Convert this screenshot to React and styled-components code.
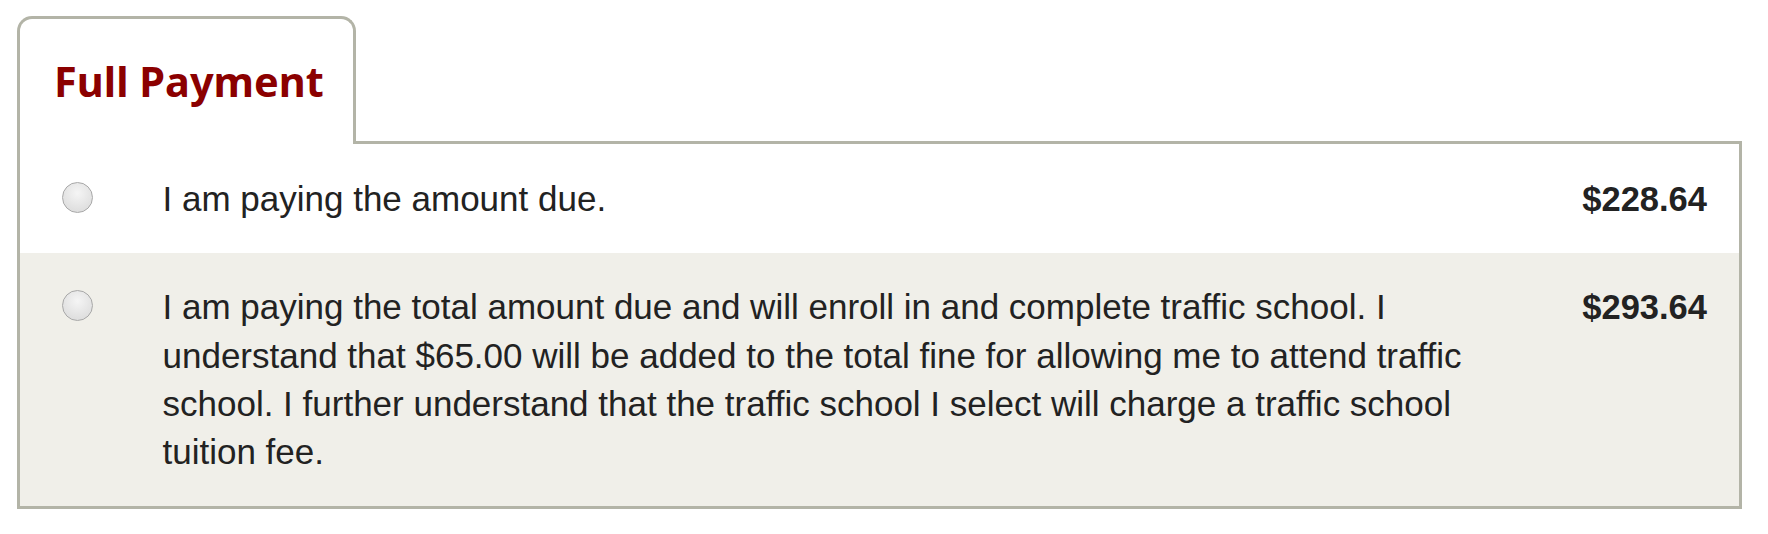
import React, { useState } from "react";
import styled, { createGlobalStyle } from "styled-components";

const options = [
  {
    id: "due",
    label: "I am paying the amount due.",
    amount: "$228.64",
  },
  {
    id: "school",
    label:
      "I am paying the total amount due and will enroll in and complete traffic school. I understand that $65.00 will be added to the total fine for allowing me to attend traffic school. I further understand that the traffic school I select will charge a traffic school tuition fee.",
    amount: "$293.64",
  },
];

function App() {
  const [selected, setSelected] = useState(null);

  return (
    <>
      <GlobalStyle />
      <Wrapper>
        <TabBar>
          <Tab>
            <TabTitle>Full Payment</TabTitle>
          </Tab>
        </TabBar>
        <Panel>
          {options.map((opt, idx) => (
            <Row key={opt.id} shaded={idx % 2 === 1}>
              <RadioCell>
                <Radio
                  type="radio"
                  name="payment"
                  checked={selected === opt.id}
                  onChange={() => setSelected(opt.id)}
                />
              </RadioCell>
              <Label>{opt.label}</Label>
              <Amount>{opt.amount}</Amount>
            </Row>
          ))}
        </Panel>
      </Wrapper>
    </>
  );
}

export default App;

const GlobalStyle = createGlobalStyle`
  body {
    margin: 0;
    background: #ffffff;
    font-family: "Liberation Sans", Arial, sans-serif;
  }
`;

const Wrapper = styled.div`
  padding: 16px 26px 0 17px;
`;

const TabBar = styled.div`
  display: flex;
`;

const Tab = styled.div`
  box-sizing: border-box;
  width: 339px;
  height: 128px;
  display: flex;
  align-items: center;
  padding-left: 34px;
  background: #ffffff;
  border: 3px solid #b3b4a7;
  border-bottom: none;
  border-radius: 15px 15px 0 0;
  margin-bottom: -3px;
  position: relative;
  z-index: 1;
`;

const TabTitle = styled.span`
  font-family: "Noto Sans", "Open Sans", sans-serif;
  font-weight: 700;
  font-size: 41.5px;
  line-height: 1;
  color: #8b0000;
`;

const Panel = styled.div`
  border: 3px solid #b3b4a7;
`;

const Row = styled.div`
  display: grid;
  grid-template-columns: 31px 1fr auto;
  align-items: start;
  padding: 30.5px 32px 30px 41.5px;
  background: ${(props) => (props.shaded ? "#f0efe9" : "#ffffff")};
`;

const RadioCell = styled.div`
  padding-top: 7px;
  display: flex;
`;

const Radio = styled.input`
  appearance: none;
  margin: 0;
  width: 31px;
  height: 31px;
  border-radius: 50%;
  border: 1.5px solid #a8a8a8;
  background: radial-gradient(circle at 50% 35%, #f5f5f5 0%, #e3e3e3 60%, #d8d8d8 100%);
  cursor: pointer;

  &:checked {
    background: radial-gradient(circle, #3a3a3a 0 28%, #e8e8e8 32% 100%);
  }
`;

const Label = styled.div`
  padding: 0 80px 0 70px;
  font-size: 35px;
  line-height: 48.3px;
  color: #222222;
`;

const Amount = styled.div`
  font-size: 34.5px;
  line-height: 48.3px;
  font-weight: 700;
  color: #222222;
`;
